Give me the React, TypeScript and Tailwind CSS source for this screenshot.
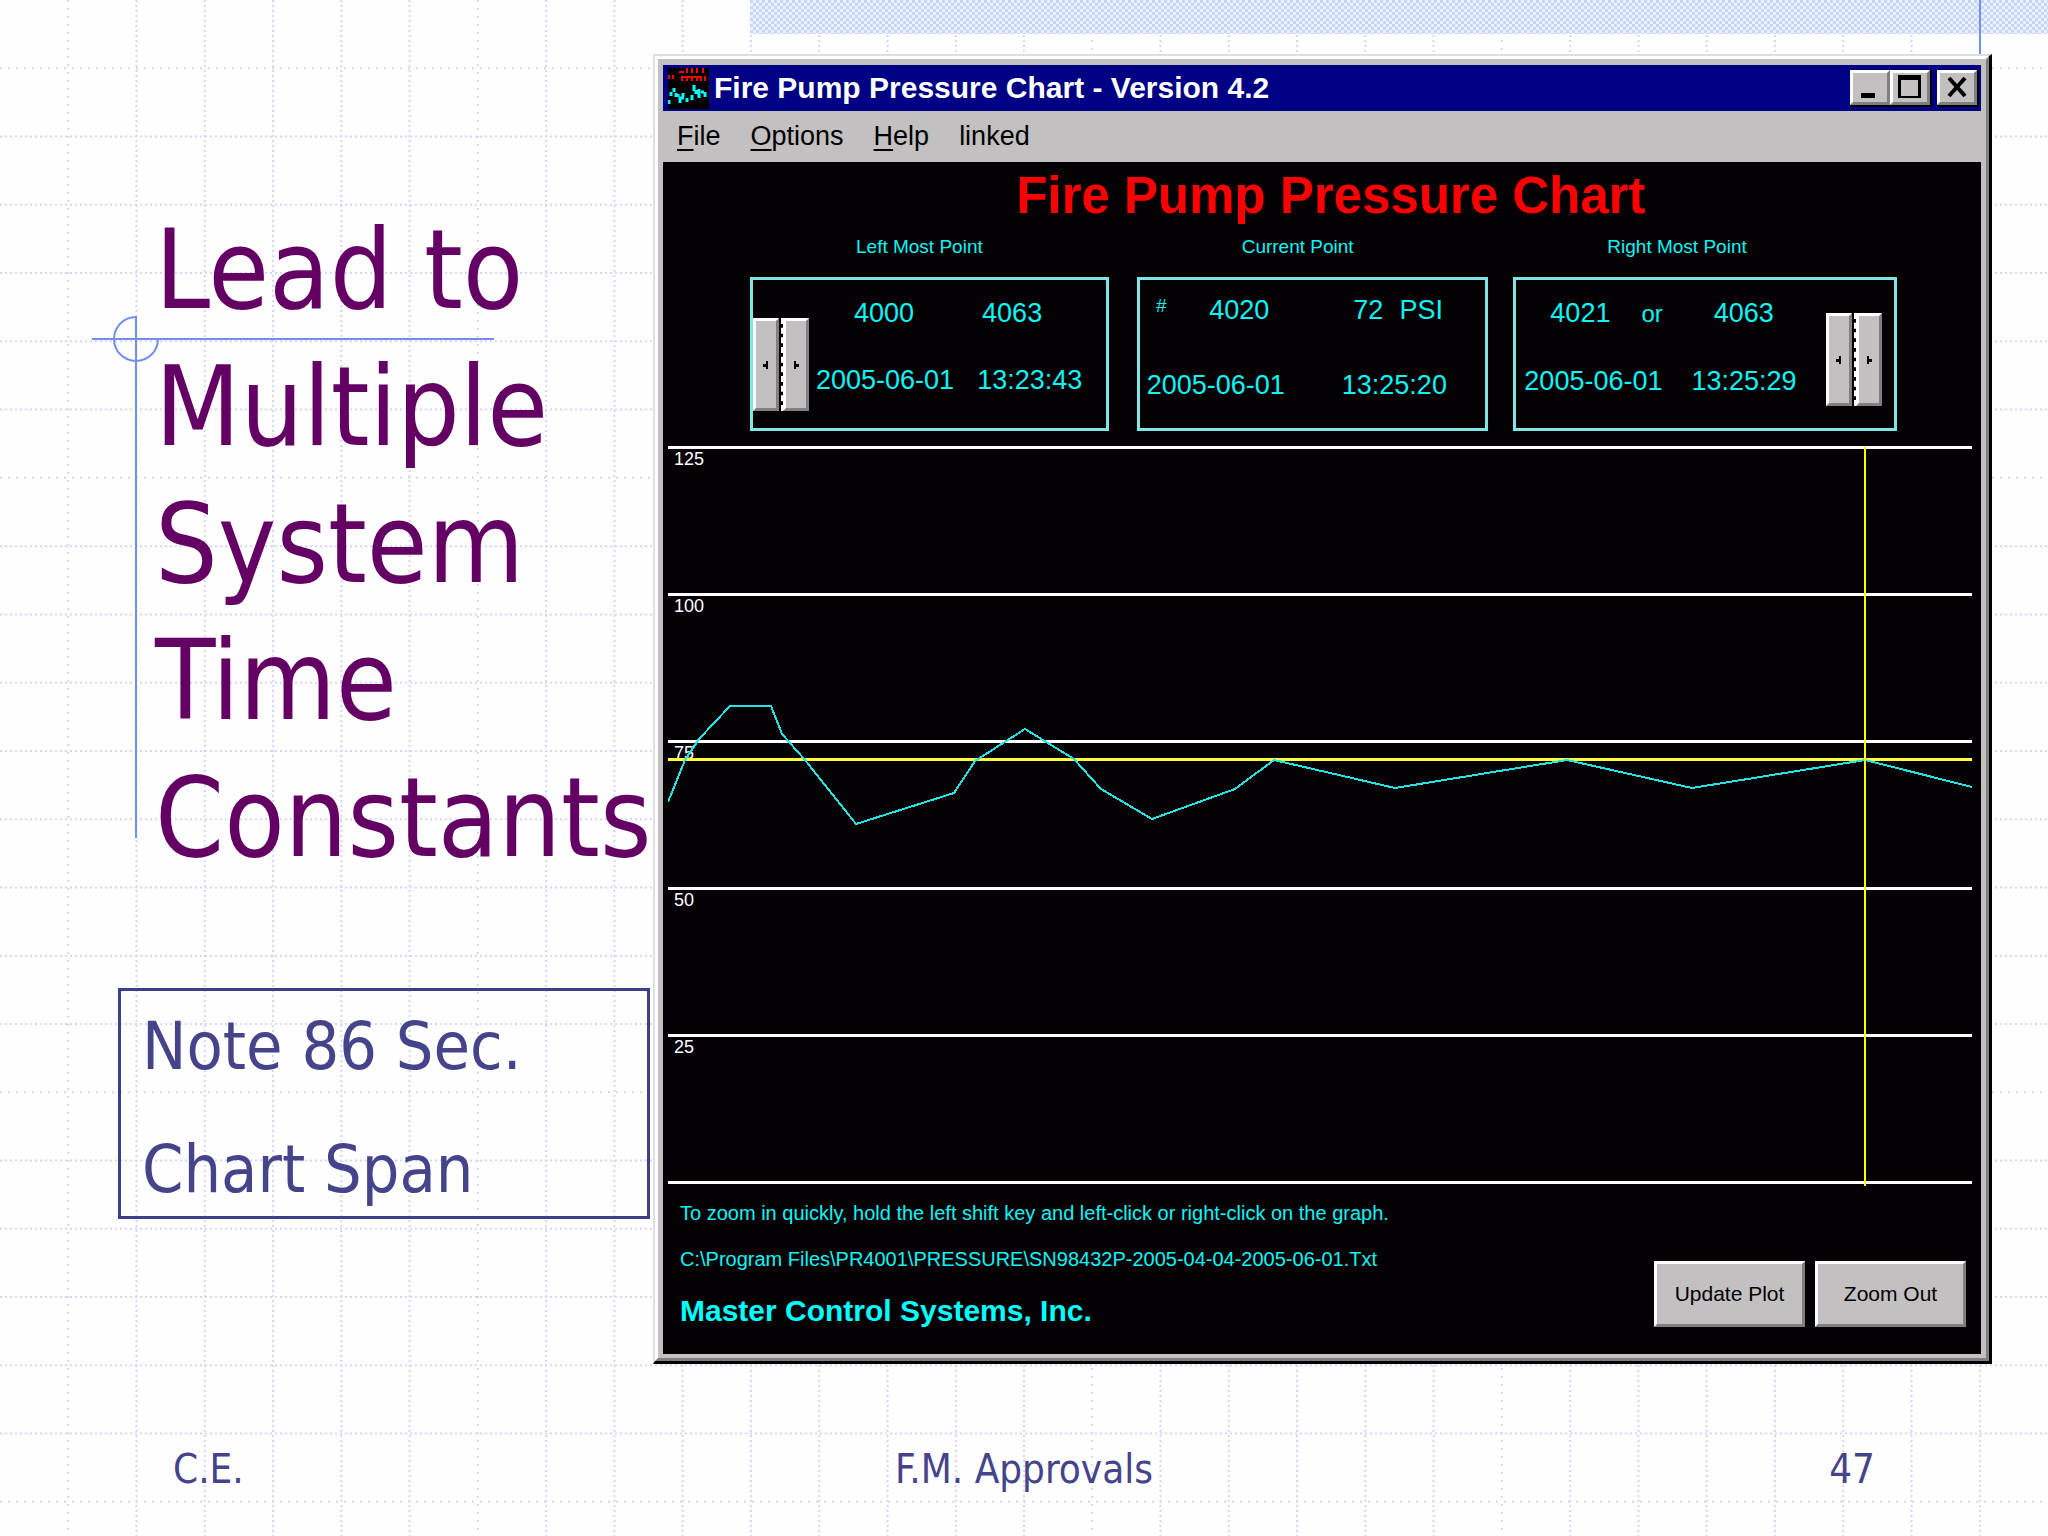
import type { ReactNode } from 'react';

const PITCH = 2048 / 30;

// Readings of the pressure trace, in chart units (1304 x 741)
const TRACE = [
  [0, 356], [17, 314], [31, 293], [62, 260], [103, 260], [114, 288], [137, 314], [188, 378],
  [286, 347], [307, 315], [357, 283], [406, 313], [433, 343], [484, 373], [567, 343], [606, 314],
  [727, 342], [899, 314], [1024, 342], [1197, 314], [1304, 341],
];

const LEVELS = ['125', '100', '75', '50', '25'];

const MENU = [
  { key: 'F', rest: 'ile' },
  { key: 'O', rest: 'ptions' },
  { key: 'H', rest: 'elp' },
  { key: '', rest: 'linked' },
];

// A few of the paper's lines are printed sparser than the rest
function lineStyle(i: number) {
  const sparse = i % 15 === 1 || i % 15 === 7;
  return sparse
    ? { stroke: '#d8d9e6', strokeDasharray: '2 6' }
    : { stroke: '#d2d6f9', strokeDasharray: '2 3' };
}

function PaperGrid() {
  const lines = Array.from({ length: 29 }, (_, i) => i + 1);
  return (
    <svg className="absolute inset-0 h-full w-full" aria-hidden="true">
      <g strokeWidth="2">
        {lines.map((i) => (
          <line key={`v${i}`} x1={i * PITCH} x2={i * PITCH} y1="0" y2="100%" {...lineStyle(i)} />
        ))}
        {lines.map((i) => (
          <line key={`h${i}`} x1="0" x2="100%" y1={i * PITCH} y2={i * PITCH} {...lineStyle(i)} />
        ))}
      </g>
    </svg>
  );
}

function Crosshair() {
  return (
    <svg className="absolute left-[92px] top-[316px]" width="402" height="522" aria-hidden="true">
      <g fill="none" stroke="#7390e8" strokeWidth="2">
        <path d="M44 0V522M0 23H402" />
        <path d="M44 1A22 22 0 1 0 66 23" />
      </g>
    </svg>
  );
}

function DitherFill() {
  return (
    <svg className="h-full w-full" aria-hidden="true">
      <defs>
        <pattern id="dither" width="6" height="6" patternUnits="userSpaceOnUse">
          <rect width="6" height="6" fill="#ebf1fe" />
          <path d="M0 0h3v3H0zM3 3h3v3H3z" fill="#c9d6fa" />
        </pattern>
      </defs>
      <rect width="100%" height="100%" fill="url(#dither)" />
    </svg>
  );
}

function AppIcon() {
  return (
    <svg width="41" height="41" viewBox="0 0 41 41" aria-hidden="true">
      <rect width="41" height="41" fill="#000" />
      <path
        d="M11 4h5M19 0v5M24 0v5M29 0v5M35 0v5M1 7v4M5 7v4M13 9h21M14 8v5M19 8v5M24 8v5M29 8v5M33 8v5M37 8v5"
        fill="none"
        stroke="#f00"
        strokeWidth="2"
      />
      <path
        d="M1 32v4M3 24v4M6 20v4M8 25v4M10 26v3M11 30h5M12 29v6M15 25v4M19 30v4M24 27v5M26 17v6M28 22v4M31 21v9M33 24h3M37 24v5"
        fill="none"
        stroke="#0ff"
        strokeWidth="3"
      />
    </svg>
  );
}

function CaptionButton({ label, children }: { label: string; children: ReactNode }) {
  return (
    <button
      type="button"
      aria-label={label}
      className="h-[35px] w-[40px] border-[3px] border-b-[#808080] border-l-white border-r-[#808080] border-t-white bg-[#c3c0c2] shadow-[1px_1px_0_1px_#000]"
    >
      <svg className="mx-auto" width="30" height="29" viewBox="0 0 30 29" aria-hidden="true">
        {children}
      </svg>
    </button>
  );
}

function Spinner({ label }: { label: string }) {
  return (
    <div className="flex h-[93px] shrink-0">
      <button
        type="button"
        aria-label={`${label} back`}
        className="flex w-[26px] items-center justify-center border-[3px] border-b-[#808080] border-l-white border-r-[#808080] border-t-white bg-[#c3c0c2]"
      >
        <svg width="6" height="10" viewBox="0 0 6 10" aria-hidden="true">
          <path d="M3 1h2v8H3zM0 4h3v3H0z" />
        </svg>
      </button>
      <span className="ml-[2px] border-l-2 border-dashed border-white" />
      <button
        type="button"
        aria-label={`${label} forward`}
        className="flex w-[26px] items-center justify-center border-[3px] border-b-[#808080] border-l-white border-r-[#808080] border-t-white bg-[#c3c0c2]"
      >
        <svg width="6" height="10" viewBox="0 0 6 10" aria-hidden="true">
          <path d="M1 1h2v8H1zM3 4h3v3H3z" />
        </svg>
      </button>
    </div>
  );
}

function PlotButton({ children }: { children: ReactNode }) {
  return (
    <button
      type="button"
      className="h-[66px] w-[151px] border-[3px] border-b-[#808080] border-l-white border-r-[#808080] border-t-white bg-[#c3c0c2] text-[21px] text-black"
    >
      {children}
    </button>
  );
}

function PointPanels() {
  return (
    <div className="mt-[9px] flex pl-[87px] pr-[84px] text-[27px] leading-8">
      <section className="mr-7 flex-[359_1_0%]">
        <h3 className="pl-[106px] text-[19px] leading-6">Left Most Point</h3>
        <div className="mt-[18px] flex h-[154px] border-[3px] border-[#7fe6e6]">
          <div className="mt-[38px]">
            <Spinner label="Left most point" />
          </div>
          <div className="flex flex-col gap-[35px] whitespace-nowrap pt-[17px]">
            <div className="flex gap-[68px] pl-[45px]">
              <span>4000</span>
              <span>4063</span>
            </div>
            <div className="flex gap-[23px] pl-[7px]">
              <span>2005-06-01</span>
              <span>13:23:43</span>
            </div>
          </div>
        </div>
      </section>

      <section className="mr-[25px] flex-[352_1_0%]">
        <h3 className="pl-[105px] text-[19px] leading-6">Current Point</h3>
        <div className="mt-[18px] flex h-[154px] flex-col gap-[43px] whitespace-nowrap border-[3px] border-[#7fe6e6] pt-[14px]">
          <div className="flex items-start pl-4">
            <span className="text-[19px] italic leading-6">#</span>
            <span className="ml-[43px]">4020</span>
            <span className="ml-[84px]">72</span>
            <span className="ml-4">PSI</span>
          </div>
          <div className="flex gap-[57px] pl-[7px]">
            <span>2005-06-01</span>
            <span>13:25:20</span>
          </div>
        </div>
      </section>

      <section className="flex-[384_1_0%]">
        <h3 className="pl-[94px] text-[19px] leading-6">Right Most Point</h3>
        <div className="mt-[18px] flex h-[154px] justify-between border-[3px] border-[#7fe6e6] pr-3">
          <div className="flex flex-col gap-[35px] whitespace-nowrap pt-[17px]">
            <div className="flex items-baseline pl-[34px]">
              <span>4021</span>
              <span className="ml-[31px] text-[24px]">or</span>
              <span className="ml-[51px]">4063</span>
            </div>
            <div className="flex gap-[29px] pl-2">
              <span>2005-06-01</span>
              <span>13:25:29</span>
            </div>
          </div>
          <div className="mt-[33px]">
            <Spinner label="Right most point" />
          </div>
        </div>
      </section>
    </div>
  );
}

function PressureChart() {
  return (
    <div className="relative ml-[5px] mr-[9px] mt-[15px] border-b-[3px] border-white">
      {LEVELS.map((level) => (
        <div key={level} className="h-[147px] border-t-[3px] border-white pl-[6px] text-[18px] leading-5 text-white">
          {level}
        </div>
      ))}
      <svg
        className="absolute left-0 top-0 h-[741px] w-full"
        viewBox="0 0 1304 741"
        preserveAspectRatio="none"
        role="img"
        aria-label="Pressure over time"
      >
        <path d="M0 313.5H1304" stroke="#ffff40" strokeWidth="3" />
        <polyline
          points={TRACE.map((p) => p.join(',')).join(' ')}
          fill="none"
          stroke="#22e6e6"
          strokeWidth="2"
          shapeRendering="crispEdges"
        />
        <path d="M1197 0V740" stroke="#ffff00" strokeWidth="2" />
      </svg>
    </div>
  );
}

function PumpWindow() {
  return (
    <div className="min-w-0 flex-1 border-b-[3px] border-l-2 border-r-[3px] border-t-2 border-b-black border-l-[#dcdfdf] border-r-black border-t-[#dcdfdf] font-['Liberation_Sans',Arial,sans-serif]">
      <div className="border-[3px] border-b-[#808080] border-l-white border-r-[#808080] border-t-white bg-[#c3c0c2] px-[5px] pb-1 pt-[6px]">
        <div className="flex h-[46px] items-center bg-[#000084] pl-[5px] pr-1">
          <AppIcon />
          <h2 className="ml-[5px] flex-1 text-[30px] font-bold leading-9 text-white">
            Fire Pump Pressure Chart - Version 4.2
          </h2>
          <div className="flex pb-[2px]">
            <CaptionButton label="Minimize">
              <path d="M6 20h14v5H6z" />
            </CaptionButton>
            <CaptionButton label="Maximize">
              <path d="M3 2h23v23H3zM6 7v16h17V7z" fillRule="evenodd" />
            </CaptionButton>
            <span className="w-[7px]" />
            <CaptionButton label="Close">
              <path d="M7 5l16 18M23 5L7 23" stroke="#000" strokeWidth="4" />
            </CaptionButton>
          </div>
        </div>

        <nav className="flex h-[51px] items-center gap-[30px] pl-[14px] text-[27px] text-black">
          {MENU.map((item) => (
            <button key={item.rest} type="button">
              <span className="underline decoration-2 underline-offset-4">{item.key}</span>
              {item.rest}
            </button>
          ))}
        </nav>

        <div className="bg-[#040004] pt-1 text-[#10f4f4]">
          <h1 className="pl-[18px] text-center text-[51px] font-bold leading-[60px] text-[#ff0000]">
            Fire Pump Pressure Chart
          </h1>
          <PointPanels />
          <PressureChart />
          <div className="flex items-start justify-between pb-[25px] pl-[17px] pr-[15px] pt-[17px]">
            <div className="flex flex-col gap-[22px] text-[20px] leading-6">
              <p>To zoom in quickly, hold the left shift key and left-click or right-click on the graph.</p>
              <p>C:\Program Files\PR4001\PRESSURE\SN98432P-2005-04-04-2005-06-01.Txt</p>
              <p className="text-[30px] font-bold leading-9 text-[#00ffff]">Master Control Systems, Inc.</p>
            </div>
            <div className="mt-[60px] flex gap-[10px]">
              <PlotButton>Update Plot</PlotButton>
              <PlotButton>Zoom Out</PlotButton>
            </div>
          </div>
        </div>
      </div>
    </div>
  );
}

export default function App() {
  return (
    <div className="relative flex min-h-screen flex-col bg-[#fefeff] font-['DejaVu_Sans_Condensed',Tahoma,sans-serif]">
      <PaperGrid />
      <Crosshair />
      <div className="relative flex h-[54px] pl-[750px]">
        <div className="h-[34px] flex-1">
          <DitherFill />
        </div>
        <div className="border-l-2 border-[#7390e8]" />
        <div className="h-[34px] w-[67px]">
          <DitherFill />
        </div>
      </div>

      <main className="relative flex items-start pr-14">
        <div className="w-[653px] shrink-0 pt-[148px]">
          <h1 className="pl-[155px] text-[110px] leading-[137px] text-[#640064]">
            Lead to Multiple System Time Constants
          </h1>
          <div className="ml-[118px] mr-[3px] mt-[101px] flex flex-col gap-[43px] border-[3px] border-[#3d3f88] pb-[6px] pl-[21px] pt-4 text-[66px] leading-[80px] text-[#45438a]">
            <p>Note 86 Sec.</p>
            <p>Chart Span</p>
          </div>
        </div>
        <PumpWindow />
      </main>

      <footer className="relative mt-[81px] grid grid-cols-3 px-[173px] text-[40px] leading-[48px] text-[#45438a]">
        <span>C.E.</span>
        <span className="text-center">F.M. Approvals</span>
        <span className="text-right">47</span>
      </footer>
    </div>
  );
}
